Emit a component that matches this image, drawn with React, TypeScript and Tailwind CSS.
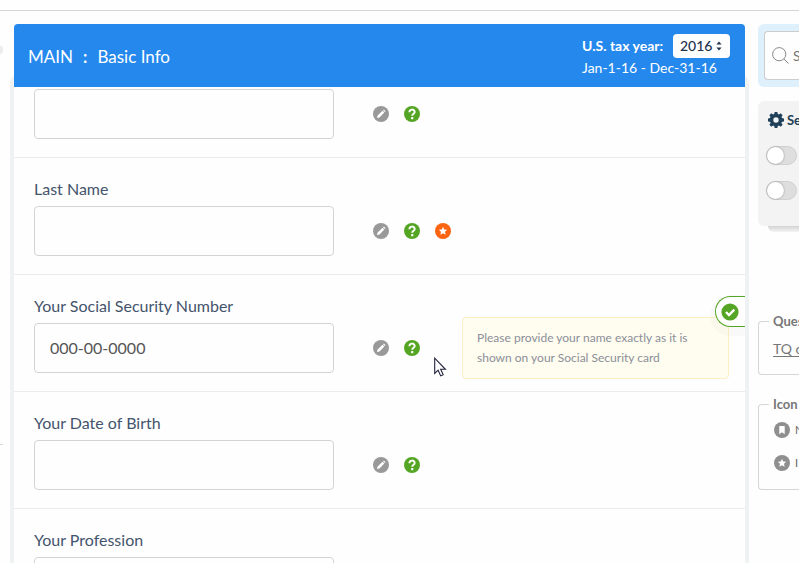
import React from "react";
import clsx from "clsx";

function PencilIcon() {
  return (
    <svg viewBox="0 0 16 16" className="block size-4" aria-hidden="true">
      <circle cx="8" cy="8" r="8" fill="#999" />
      <path d="M3.9 12.1l.7-2.6 4.9-4.7 1.8 1.8-4.8 4.8zM10 4.3l.9-.8 1.7 1.7-.8.8z" fill="#fff" />
    </svg>
  );
}

function HelpIcon() {
  return (
    <svg viewBox="0 0 16 16" className="block size-4" aria-hidden="true">
      <circle cx="8" cy="8" r="8" fill="#55a524" />
      <path d="M5.4 6.2c0-3.5 5.3-3.4 5.3-.3 0 1.8-2.5 1.8-2.5 3.9" fill="none" stroke="#fff" strokeWidth="1.9" />
      <rect x="7.1" y="11" width="2.2" height="2.2" rx=".5" fill="#fff" />
    </svg>
  );
}

function StarIcon({ color }: { color: string }) {
  return (
    <svg viewBox="0 0 16 16" className="block size-4 shrink-0" aria-hidden="true">
      <circle cx="8" cy="8" r="8" fill={color} />
      <path d="M8 3.8l1.2 2.7 3 .3-2.2 2 .6 2.9L8 10.2l-2.6 1.5.6-2.9-2.2-2 3-.3z" fill="#fff" />
    </svg>
  );
}

function BookmarkIcon() {
  return (
    <svg viewBox="0 0 16 16" className="block size-4 shrink-0" aria-hidden="true">
      <circle cx="8" cy="8" r="8" fill="#8f8f8f" />
      <path d="M5.3 4h5.4v8.3L8 10.2l-2.7 2.1z" fill="#fff" />
    </svg>
  );
}

function GearIcon() {
  return (
    <svg viewBox="0 0 16 16" className="block size-4 shrink-0" aria-hidden="true">
      <g fill="#1f4058">
        <path
          fillRule="evenodd"
          d="M8 1.8a6.2 6.2 0 1 0 0 12.4A6.2 6.2 0 0 0 8 1.8zm0 3.5a2.7 2.7 0 1 1 0 5.4 2.7 2.7 0 0 1 0-5.4z"
        />
        {[0, 45, 90, 135, 180, 225, 270, 315].map((angle) => (
          <path key={angle} d="M6.6 0h2.8l.5 3H6.1z" transform={`rotate(${angle} 8 8)`} />
        ))}
      </g>
    </svg>
  );
}

type FieldProps = {
  id: string;
  label: string;
  first?: boolean;
  value?: string;
  starred?: boolean;
  hint?: string;
};

function Field({ id, label, first, value, starred, hint }: FieldProps) {
  return (
    <div className={clsx("relative border-b border-[#ebecec] pr-4 pb-[18px] pl-5", first ? "pt-0.5" : "pt-[19px]")}>
      {!first && (
        <label htmlFor={id} className="mb-[5px] block text-[16px] leading-6 text-[#44546c]">
          {label}
        </label>
      )}
      <div className="flex items-center">
        <input
          id={id}
          type="text"
          aria-label={first ? label : undefined}
          defaultValue={value}
          className="h-[50px] w-[300px] shrink-0 rounded border border-[#d3d4d5] bg-[#fefefe] px-[15px] pb-0.5 text-[16px] text-[#555]"
        />
        <div className="ml-[39px] flex w-[77px] shrink-0 gap-[15px]">
          <button type="button" aria-label="Note">
            <PencilIcon />
          </button>
          <button type="button" aria-label="Help">
            <HelpIcon />
          </button>
          {starred && (
            <button type="button" aria-label="Important">
              <StarIcon color="#fb6511" />
            </button>
          )}
        </div>
        {hint && (
          <p className="-my-2 ml-3 min-w-0 flex-1 rounded border border-[#fcefc4] bg-[#fffcf0] py-2.5 pr-8 pl-3.5 text-[12px] leading-5 text-[#8b8f98]">
            {hint}
          </p>
        )}
      </div>
      {hint && (
        <>
          <span className="absolute top-[21px] right-0 flex h-[31px] w-[30px] items-center rounded-l-full border border-r-0 border-[#55a524] bg-[#fefefe] pl-[5px] shadow-[0_4px_0_5px_rgba(0,0,0,0.02)] [clip-path:inset(-8px_0_-10px_-10px)]">
            <svg viewBox="0 0 18 18" className="block size-[18px]" aria-hidden="true">
              <circle cx="9" cy="9" r="8.6" fill="#55a524" />
              <path d="M5 9l3 3 5.3-5.4" fill="none" stroke="#fff" strokeWidth="2.4" />
            </svg>
          </span>
          <svg viewBox="0 0 13 20" className="absolute top-[82px] left-[420px] h-5 w-[13px]" aria-hidden="true">
            <path
              d="M.7 1.2v15.2l3.4-3.2 2.6 5.7 2.5-1.1-2.5-5.5h4.7z"
              fill="#fff"
              stroke="#23233c"
              strokeWidth="1.1"
            />
          </svg>
        </>
      )}
    </div>
  );
}

function Toggle({ label }: { label: string }) {
  return (
    <input
      type="checkbox"
      role="switch"
      aria-label={label}
      className="block h-[19px] w-[31px] appearance-none rounded-full border border-[#d0d0d0] bg-[#dedede] before:block before:size-[17px] before:rounded-full before:bg-white before:shadow-[0_0_2px_rgba(0,0,0,0.4)] before:content-['']"
    />
  );
}

function Sidebar() {
  return (
    <aside className="w-[41px] shrink-0 overflow-hidden text-[14px] whitespace-nowrap text-[#777]">
      <div className="rounded-l-md bg-[#dff0fd] py-[7px] pl-1.5">
        <div className="flex h-[49px] items-center rounded-l border border-r-0 border-[#ccc] bg-[#fefefe] pl-[7px]">
          <svg viewBox="0 0 17 17" className="mr-1 block size-[17px] shrink-0" aria-hidden="true">
            <circle cx="7.2" cy="7.2" r="6.6" fill="none" stroke="#888" />
            <path d="M12 12l4.5 4.5" stroke="#888" />
          </svg>
          <span>S</span>
        </div>
      </div>
      <section className="mt-3.5">
        <div className="h-[125px] rounded-l-md bg-[#f3f3f3] pt-[7px] pl-2">
          <h2 className="flex items-center gap-[3px] pl-0.5 text-[13px] leading-6 font-bold text-[#1f4058]">
            <GearIcon />
            Se
          </h2>
          <div className="mt-3.5 flex flex-col gap-4">
            <Toggle label="First setting" />
            <Toggle label="Second setting" />
          </div>
        </div>
        <div className="ml-2.5 h-1.5 rounded-bl-md bg-linear-to-b from-[#d4d4d4] to-[#f4f4f4]" />
      </section>
      <fieldset className="mt-[79px] h-[64px] rounded-l border border-r-0 border-[#d6d6d6] pl-3.5">
        <legend className="-ml-1 pr-1 pl-1 text-[13px] leading-5 font-bold">Ques</legend>
        <a href="#tq" className="block pt-2 text-[14px] leading-5 underline underline-offset-2">
          TQ c
        </a>
      </fieldset>
      <fieldset className="mt-[19px] rounded-l border border-r-0 border-[#d6d6d6] pb-[18px] pl-3.5">
        <legend className="-ml-1 pr-1 pl-1 text-[13px] leading-5 font-bold">Icon</legend>
        <div className="flex flex-col gap-[17px] pt-2 pl-px text-[11px] leading-4 text-[#666]">
          <div className="flex gap-[5px]">
            <BookmarkIcon />N
          </div>
          <div className="flex gap-[5px]">
            <StarIcon color="#8f8f8f" />I
          </div>
        </div>
      </fieldset>
    </aside>
  );
}

export default function App() {
  return (
    <div className="flex h-screen flex-col overflow-hidden bg-[#fefefe] font-['Lato','Noto_Sans',sans-serif]">
      <div className="h-[11px] shrink-0 border-b border-[#d6d6d6]" />
      <div className="flex min-h-0 flex-1 pt-[13px]">
        <div className="w-3.5 shrink-0">
          <div className="mt-[22px] h-2 w-[3px] rounded-r-full bg-[#ececec]" />
          <div className="mt-[390px] h-px w-[3px] bg-[#d6d6d6]" />
        </div>
        <main className="mr-[13px] min-w-0 flex-1">
          <header className="relative z-10 flex h-[63px] items-center justify-between rounded-t bg-[#2588ed] pr-[15px] pl-3.5 text-white">
            <h1 className="flex gap-2.5 pt-0.5 text-[17px] leading-6">
              <span>MAIN</span>
              <span className="font-bold">:</span>
              <span>Basic Info</span>
            </h1>
            <div className="w-[148px] text-[14px]">
              <div className="flex items-center justify-between">
                <label htmlFor="tax-year" className="font-bold whitespace-nowrap">
                  U.S. tax year:
                </label>
                <div className="relative">
                  <select
                    id="tax-year"
                    className="block h-6 w-[57px] appearance-none rounded bg-[#fefefe] pl-[7px] text-[14px] font-medium text-[#22324c]"
                  >
                    <option>2016</option>
                  </select>
                  <svg
                    viewBox="0 0 6 10"
                    className="pointer-events-none absolute top-[7px] right-2 h-2.5 w-1.5"
                    aria-hidden="true"
                  >
                    <path d="M3 .6l2.6 3H.4zM3 9.4l2.6-3H.4z" fill="#22324c" />
                  </svg>
                </div>
              </div>
              <p className="leading-5 whitespace-nowrap">Jan-1-16 - Dec-31-16</p>
            </div>
          </header>
          <form className="-mt-2 rounded-t bg-[#fefefe] pt-2 shadow-[0_0_0_4px_#eff2f2]">
            <Field id="first-name" label="First Name" first />
            <Field id="last-name" label="Last Name" starred />
            <Field
              id="ssn"
              label="Your Social Security Number"
              value="000-00-0000"
              hint="Please provide your name exactly as it is shown on your Social Security card"
            />
            <Field id="birth-date" label="Your Date of Birth" />
            <Field id="profession" label="Your Profession" />
          </form>
        </main>
        <Sidebar />
      </div>
    </div>
  );
}
